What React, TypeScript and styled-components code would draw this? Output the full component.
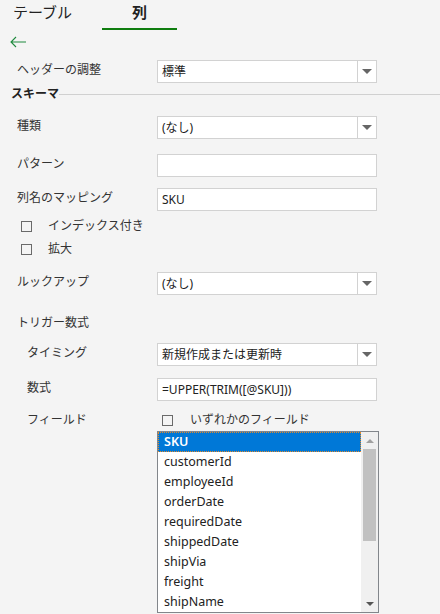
import React from "react";
import styled, { createGlobalStyle } from "styled-components";

const Global = createGlobalStyle`
  html, body { margin: 0; padding: 0; background: #f4f4f4; }
  body { font-family: "Noto Sans", "Noto Sans CJK JP", sans-serif; font-size: 12px; color: #333; }
  * { box-sizing: border-box; }
`;

const Page = styled.div`
  width: 440px;
  height: 614px;
  overflow: hidden;
  background: #f4f4f4;
  display: flex;
  flex-direction: column;
`;

const Tabs = styled.div`
  display: flex;
  height: 30px;
  flex-shrink: 0;
  padding-left: 13px;
`;

const Tab = styled.div<{ $active?: boolean; $w: number }>`
  width: ${(p) => p.$w}px;
  font-size: 15px;
  height: 30px;
  text-align: ${(p) => (p.$active ? "center" : "left")};
  font-weight: ${(p) => (p.$active ? 700 : 400)};
  color: #222;
  border-bottom: 2px solid ${(p) => (p.$active ? "#0f7d0f" : "transparent")};
  padding-bottom: 4px;
  line-height: 24px;
`;

const Back = styled.div`
  height: 22px;
  flex-shrink: 0;
  padding: 6px 0 0 10px;
  display: flex;
  align-items: flex-start;
`;

const Row = styled.div<{ $top: number; $indent?: number }>`
  display: grid;
  flex-shrink: 0;
  grid-template-columns: ${(p) => 157 - (p.$indent ?? 17)}px 220px;
  padding-left: ${(p) => p.$indent ?? 17}px;
  margin-top: ${(p) => p.$top}px;
  align-items: start;
`;

const Label = styled.div`
  font-size: 12px;
  line-height: 20px;
  color: #333;
  white-space: nowrap;
`;

const Field = styled.div`
  height: 23px;
  background: #fff;
  border: 1px solid #d2d2d2;
  display: flex;
  align-items: center;
  font-size: 12px;
  color: #222;
`;

const FieldText = styled.div`
  flex: 1;
  padding-left: 4px;
  line-height: 21px;
  white-space: nowrap;
  overflow: hidden;
`;

const DropBtn = styled.div`
  width: 19px;
  height: 100%;
  border-left: 1px solid #d2d2d2;
  display: flex;
  align-items: center;
  justify-content: center;
`;

const Tri = styled.div`
  width: 0;
  height: 0;
  border-left: 5px solid transparent;
  border-right: 5px solid transparent;
  border-top: 5px solid #666;
`;

const Section = styled.div`
  display: flex;
  flex-shrink: 0;
  align-items: center;
  margin-top: 4px;
  padding-left: 11px;
  height: 14px;
`;

const SectionTitle = styled.div`
  font-weight: 700;
  font-size: 12px;
  line-height: 14px;
  color: #222;
`;

const SectionLine = styled.div`
  flex: 1;
  height: 1px;
  background: #d0d0d0;
`;

const CheckRow = styled.div<{ $top: number; $left: number; $gap: number }>`
  display: flex;
  flex-shrink: 0;
  align-items: center;
  margin-top: ${(p) => p.$top}px;
  padding-left: ${(p) => p.$left}px;
  gap: ${(p) => p.$gap}px;
  height: 20px;
`;

const Box = styled.span`
  width: 11px;
  height: 11px;
  border: 1px solid #6a6a6a;
  background: transparent;
  display: inline-block;
`;

const Plain = styled.div`
  font-size: 12px;
  line-height: 20px;
`;

const SubTitle = styled.div<{ $top: number }>`
  flex-shrink: 0;
  padding-left: 17px;
  margin-top: ${(p) => p.$top}px;
  font-size: 12px;
  line-height: 20px;
`;

const FieldCell = styled.div`
  display: flex;
  align-items: center;
  gap: 17px;
  margin-left: 5px;
  height: 20px;
`;

const ListWrap = styled.div`
  flex-shrink: 0;
  margin-left: 157px;
  margin-top: 1px;
  width: 222px;
  height: 182px;
  border: 1px solid #82868b;
  background: #fff;
  display: flex;
`;

const ListItems = styled.div`
  flex: 1;
  display: flex;
  flex-direction: column;
`;

const Item = styled.div<{ $sel?: boolean }>`
  height: 20px;
  line-height: 19px;
  padding-left: 6px;
  font-size: 12.5px;
  color: ${(p) => (p.$sel ? "#fff" : "#222")};
  background: ${(p) => (p.$sel ? "#0078d7" : "transparent")};
  outline: ${(p) => (p.$sel ? "1px dotted #e58a2a" : "none")};
  outline-offset: -1px;
  font-weight: ${(p) => (p.$sel ? 600 : 400)};
`;

const Scroll = styled.div`
  width: 17px;
  background: #f0f0f0;
  display: flex;
  flex-direction: column;
  align-items: center;
`;

const ScrollBtn = styled.div`
  height: 17px;
  width: 17px;
  display: flex;
  align-items: center;
  justify-content: center;
`;

const Thumb = styled.div`
  width: 13px;
  height: 92px;
  background: #c1c1c1;
`;

const TriUp = styled.div`
  width: 0;
  height: 0;
  border-left: 4px solid transparent;
  border-right: 4px solid transparent;
  border-bottom: 4px solid #a0a0a0;
`;

const TriDown = styled.div`
  width: 0;
  height: 0;
  border-left: 4px solid transparent;
  border-right: 4px solid transparent;
  border-top: 4px solid #555;
`;

const Spacer = styled.div`
  flex: 1;
`;

const Select = ({ text }: { text: string }) => (
  <Field>
    <FieldText>{text}</FieldText>
    <DropBtn>
      <Tri />
    </DropBtn>
  </Field>
);

const Input = ({ text }: { text?: string }) => (
  <Field>
    <FieldText>{text ?? ""}</FieldText>
  </Field>
);

const fields = [
  "SKU",
  "customerId",
  "employeeId",
  "orderDate",
  "requiredDate",
  "shippedDate",
  "shipVia",
  "freight",
  "shipName",
];

export default function App() {
  return (
    <Page>
      <Global />
      <Tabs>
        <Tab $w={89}>テーブル</Tab>
        <Tab $w={75} $active>
          列
        </Tab>
      </Tabs>
      <Back>
        <svg width="16" height="12" viewBox="0 0 16 12">
          <path d="M6 1 L1 6 L6 11 M1 6 H16" fill="none" stroke="#1f8a3e" strokeWidth="1.1" />
        </svg>
      </Back>
      <Row $top={8}>
        <Label>ヘッダーの調整</Label>
        <Select text="標準" />
      </Row>
      <Section>
        <SectionTitle>スキーマ</SectionTitle>
        <SectionLine />
      </Section>
      <Row $top={15}>
        <Label>種類</Label>
        <Select text="(なし)" />
      </Row>
      <Row $top={15}>
        <Label>パターン</Label>
        <Input />
      </Row>
      <Row $top={11}>
        <Label>列名のマッピング</Label>
        <Input text="SKU" />
      </Row>
      <CheckRow $top={5} $left={21} $gap={16}>
        <Box />
        <Plain>インデックス付き</Plain>
      </CheckRow>
      <CheckRow $top={3} $left={21} $gap={16}>
        <Box />
        <Plain>拡大</Plain>
      </CheckRow>
      <Row $top={13}>
        <Label>ルックアップ</Label>
        <Select text="(なし)" />
      </Row>
      <SubTitle $top={18}>トリガー数式</SubTitle>
      <Row $top={10} $indent={27}>
        <Label>タイミング</Label>
        <Select text="新規作成または更新時" />
      </Row>
      <Row $top={12} $indent={27}>
        <Label>数式</Label>
        <Input text="=UPPER(TRIM([@SKU]))" />
      </Row>
      <Row $top={9} $indent={27}>
        <Label>フィールド</Label>
        <FieldCell>
          <Box />
          <Plain>いずれかのフィールド</Plain>
        </FieldCell>
      </Row>
      <ListWrap>
        <ListItems>
          {fields.map((f, i) => (
            <Item key={f} $sel={i === 0}>
              {f}
            </Item>
          ))}
        </ListItems>
        <Scroll>
          <ScrollBtn>
            <TriUp />
          </ScrollBtn>
          <Thumb />
          <Spacer />
          <ScrollBtn>
            <TriDown />
          </ScrollBtn>
        </Scroll>
      </ListWrap>
    </Page>
  );
}
